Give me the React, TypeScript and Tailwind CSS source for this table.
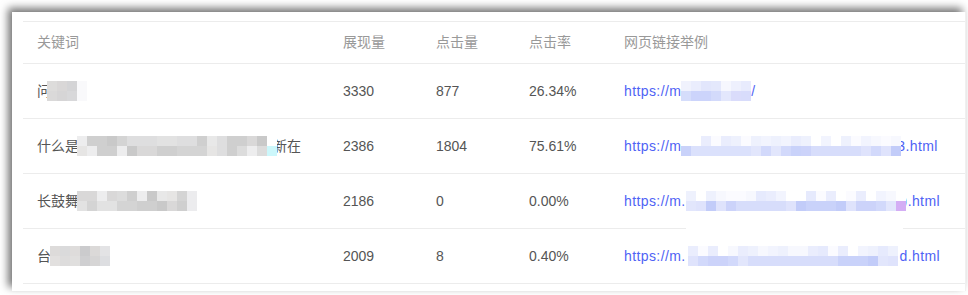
import React from 'react';

const GRAY = ['#d4d4d4', '#dcdcdc', '#e2e2e2', '#d9d8d8', '#e8e8e8', '#cfcfcf', '#dededf', '#c9c9c9', '#e6e5e4', '#ededee'];
const BLUE_LO = ['#c9d2fa', '#d2d9fb', '#dbe1fc', '#c2ccf9', '#d7ddfb', '#e2e6fc', '#ccd3fa', '#dfe3fc'];
const BLUE_HI = ['#ffffff', '#f7f8fe', '#eef1fd', '#e6eafd', '#f2f4fe', '#fbfbff', '#eaedfd'];

// deterministic "pixelated" blur block
function pick(n: number, pal: string[], seed: number) {
  const out: string[] = [];
  let s = seed;
  for (let i = 0; i < n; i++) {
    s = (s * 1103515245 + 12345) & 0x7fffffff;
    out.push(pal[(s >> 8) % pal.length]);
  }
  return out;
}

type MosaicProps = {
  top: string[];
  bottom: string[];
  className?: string;
  children?: React.ReactNode;
};

const Mosaic: React.FC<MosaicProps> = ({ top, bottom, className = '', children }) => (
  <span className={`relative z-10 flex flex-col shrink-0 ${className}`}>
    {[top, bottom].map((row, r) => (
      <span key={r} className="flex">
        {row.map((c, i) => (
          <span key={i} className="block w-[10px] h-[10px]" style={{ backgroundColor: c }} />
        ))}
      </span>
    ))}
    {children}
  </span>
);

const headers = ['关键词', '展现量', '点击量', '点击率', '网页链接举例'];

const rows = [
  {
    keyword: (
      <>
        <span>问</span>
        <Mosaic
          className="-ml-[4px]"
          top={['#dddcdb', '#d9d7d7', '#d4d4d6', '#f9f9fb']}
          bottom={['#dad9d9', '#d6d5d6', '#d8d8da', '#f9f9fb']}
        />
      </>
    ),
    shows: '3330',
    clicks: '877',
    rate: '26.34%',
    link: (
      <>
        <span>https://m</span>
        <Mosaic
          top={['#f0f2fd', '#eaedfd', '#e2e6fc', '#e4e8fc', '#f6f7fe', '#eef0fd', '#e8ebfd']}
          bottom={['#d5ddfb', '#ccd4fb', '#ccd4fb', '#d3dafb', '#e3e7fc', '#dadcfb', '#d8dcfb']}
        />
        <span>/</span>
      </>
    ),
  },
  {
    keyword: (
      <>
        <span>什么是</span>
        <Mosaic
          className="-ml-[2px]"
          top={[...pick(19, GRAY, 7), '#ffffff']}
          bottom={[...pick(19, GRAY, 11), '#ccf7fb']}
        />
        <span className="-ml-[4px]">新在</span>
      </>
    ),
    shows: '2386',
    clicks: '1804',
    rate: '75.61%',
    link: (
      <>
        <span>https://m</span>
        <Mosaic top={pick(22, BLUE_HI, 3)} bottom={pick(22, BLUE_LO, 5)} />
        <span className="-ml-[4px]">3.html</span>
      </>
    ),
  },
  {
    keyword: (
      <>
        <span>长鼓舞</span>
        <Mosaic
          className="-ml-[2px]"
          top={[...pick(11, GRAY, 21), '#ececee']}
          bottom={[...pick(11, GRAY, 29), '#ececee']}
        />
      </>
    ),
    shows: '2186',
    clicks: '0',
    rate: '0.00%',
    link: (
      <>
        <span>https://m.</span>
        <Mosaic top={[...pick(21, BLUE_HI, 13), '#ffffff']} bottom={[...pick(21, BLUE_LO, 17), '#d4aef5']}>
          <span className="absolute left-0 top-[20px] w-[217px] h-[34px] bg-white" />
        </Mosaic>
        <span className="-ml-[3px]">).html</span>
      </>
    ),
  },
  {
    keyword: (
      <>
        <span>台</span>
        <Mosaic
          className="-ml-[1px]"
          top={['#dddbda', '#dadadb', '#dedcdb', '#cbcbcd', '#dbd9d8', '#e3e3e5']}
          bottom={['#e2e0df', '#dddcdc', '#e0dfde', '#cfcfd1', '#d6d5d5', '#dddee1']}
        />
      </>
    ),
    shows: '2009',
    clicks: '8',
    rate: '0.40%',
    link: (
      <>
        <span>https://m.</span>
        <Mosaic className="ml-[2px]" top={pick(21, BLUE_HI, 37)} bottom={pick(21, BLUE_LO, 41)} />
        <span className="ml-[2px]">d.html</span>
      </>
    ),
  },
];

const cols = 'grid grid-cols-[306px_93px_93px_95px_1fr]';

export default function App() {
  return (
    <div className="min-h-screen bg-white pl-[12px] pt-[12px] font-['Liberation_Sans','Noto_Sans_CJK_SC',sans-serif] text-[14px]">
      <div className="w-[954px] h-[279px] bg-white pl-[11px] pt-[9px] border-r border-[#f0f0f0] shadow-[-4px_-4px_8px_rgba(0,0,0,0.55)]">
        <div className={`${cols} h-[43px] border-y border-[#ececec] text-[#999999]`}>
          {headers.map((h) => (
            <div key={h} className="px-[14px] flex items-center">
              {h}
            </div>
          ))}
        </div>
        {rows.map((row, i) => (
          <div key={i} className={`${cols} h-[55px] border-b border-[#ececec] text-[#555555]`}>
            <div className="px-[14px] flex items-center whitespace-nowrap">{row.keyword}</div>
            <div className="px-[14px] flex items-center">{row.shows}</div>
            <div className="px-[14px] flex items-center">{row.clicks}</div>
            <div className="px-[14px] flex items-center">{row.rate}</div>
            <div className="px-[14px] flex items-center whitespace-nowrap text-[#4f63f5] tracking-[0.4px]">
              {row.link}
            </div>
          </div>
        ))}
      </div>
    </div>
  );
}
